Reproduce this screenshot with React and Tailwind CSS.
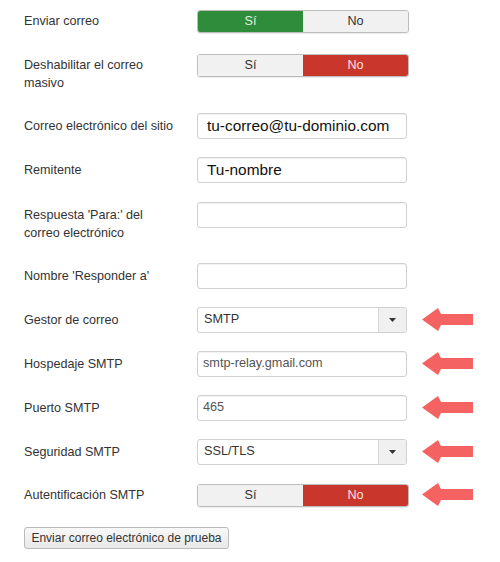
import React from 'react'

// ── flecha roja de anotación ──────────────────────────────────────────────
function Arrow({ className = '' }) {
  return (
    <svg width="51" height="23" viewBox="0 0 51 23" className={className}>
      <polygon points="0,11.5 16,0 19,6 51,6 51,17 19,17 16,23" fill="#f46262" />
    </svg>
  )
}

function Label({ children, pt = 'pt-[4px]' }) {
  return (
    <div className={`w-[173px] shrink-0 pr-[20px] text-[12.6px] leading-[18px] text-[#333] ${pt}`}>
      {children}
    </div>
  )
}

// Sí / No
function Toggle({ value }) {
  const yes = value === 'yes'
  return (
    <div className="flex h-[23px] w-[212px] overflow-hidden rounded-[3px] border border-[#bdbdbd] text-[12.6px] shadow-[0_1px_1px_rgba(0,0,0,0.08)]">
      <div
        className={`flex flex-1 items-center justify-center ${
          yes ? 'bg-[#2f8c3b] text-[#dff3df]' : 'bg-[#f1f1f1] text-[#333]'
        }`}
      >
        Sí
      </div>
      <div
        className={`flex flex-1 items-center justify-center ${
          yes ? 'bg-[#f1f1f1] text-[#333]' : 'bg-[#c9362c] text-[#fbe3e1]'
        }`}
      >
        No
      </div>
    </div>
  )
}

function Input({ value = '', big }) {
  return (
    <div
      className={`flex h-[26px] w-[210px] items-center rounded-[3px] border border-[#d0d0d0] bg-white shadow-[inset_0_1px_1px_rgba(0,0,0,0.06)] ${
        big ? 'pl-[9px] text-[15.4px] text-[#111]' : 'pl-[5px] text-[12.7px] text-[#555]'
      }`}
    >
      {value}
    </div>
  )
}

function Select({ value }) {
  return (
    <div className="flex h-[26px] w-[210px] overflow-hidden rounded-[3px] border border-[#d0d0d0] bg-white text-[12.7px] text-[#333]">
      <div className="flex flex-1 items-center pl-[6px]">{value}</div>
      <div className="flex w-[28px] items-center justify-center border-l border-[#d6d6d6] bg-[#f0f0f0]">
        <svg width="7" height="4" viewBox="0 0 7 4">
          <polygon points="0,0 7,0 3.5,4" fill="#333" />
        </svg>
      </div>
    </div>
  )
}

export default function App() {
  return (
    <div
      className="h-[562px] w-[500px] bg-white pl-[24px] pt-[10px]"
      style={{ fontFamily: '"Liberation Sans", Arial, sans-serif' }}
    >
      <div className="flex items-start">
        <Label pt="pt-[2px]">Enviar correo</Label>
        <Toggle value="yes" />
      </div>

      <div className="mt-[21px] flex items-start">
        <Label pt="pt-[2px]">Deshabilitar el correo masivo</Label>
        <Toggle value="no" />
      </div>

      <div className="mt-[21px] flex items-start">
        <Label>Correo electrónico del sitio</Label>
        <Input value="tu-correo@tu-dominio.com" big />
      </div>

      <div className="mt-[18px] flex items-start">
        <Label>Remitente</Label>
        <Input value="Tu-nombre" big />
      </div>

      <div className="mt-[19px] flex items-start">
        <Label>Respuesta 'Para:' del correo electrónico</Label>
        <Input />
      </div>

      <div className="mt-[21px] flex items-start">
        <Label>Nombre 'Responder a'</Label>
        <Input />
      </div>

      <div className="mt-[18px] flex items-start">
        <Label>Gestor de correo</Label>
        <Select value="SMTP" />
        <Arrow className="ml-[15px] mt-[1px]" />
      </div>

      <div className="mt-[18px] flex items-start">
        <Label>Hospedaje SMTP</Label>
        <Input value="smtp-relay.gmail.com" />
        <Arrow className="ml-[15px] mt-[1px]" />
      </div>

      <div className="mt-[18px] flex items-start">
        <Label>Puerto SMTP</Label>
        <Input value="465" />
        <Arrow className="ml-[15px] mt-[1px]" />
      </div>

      <div className="mt-[18px] flex items-start">
        <Label>Seguridad SMTP</Label>
        <Select value="SSL/TLS" />
        <Arrow className="ml-[15px] mt-[1px]" />
      </div>

      <div className="mt-[19px] flex items-start">
        <Label pt="pt-[2px]">Autentificación SMTP</Label>
        <Toggle value="no" />
        <Arrow className="ml-[13px] -mt-[1px]" />
      </div>

      <button className="mt-[20px] flex h-[22px] w-[205px] items-center justify-center rounded-[3px] border border-[#bcbcbc] bg-gradient-to-b from-[#f8f8f8] to-[#e8e8e8] text-[12px] text-[#333]">
        Enviar correo electrónico de prueba
      </button>
    </div>
  )
}
